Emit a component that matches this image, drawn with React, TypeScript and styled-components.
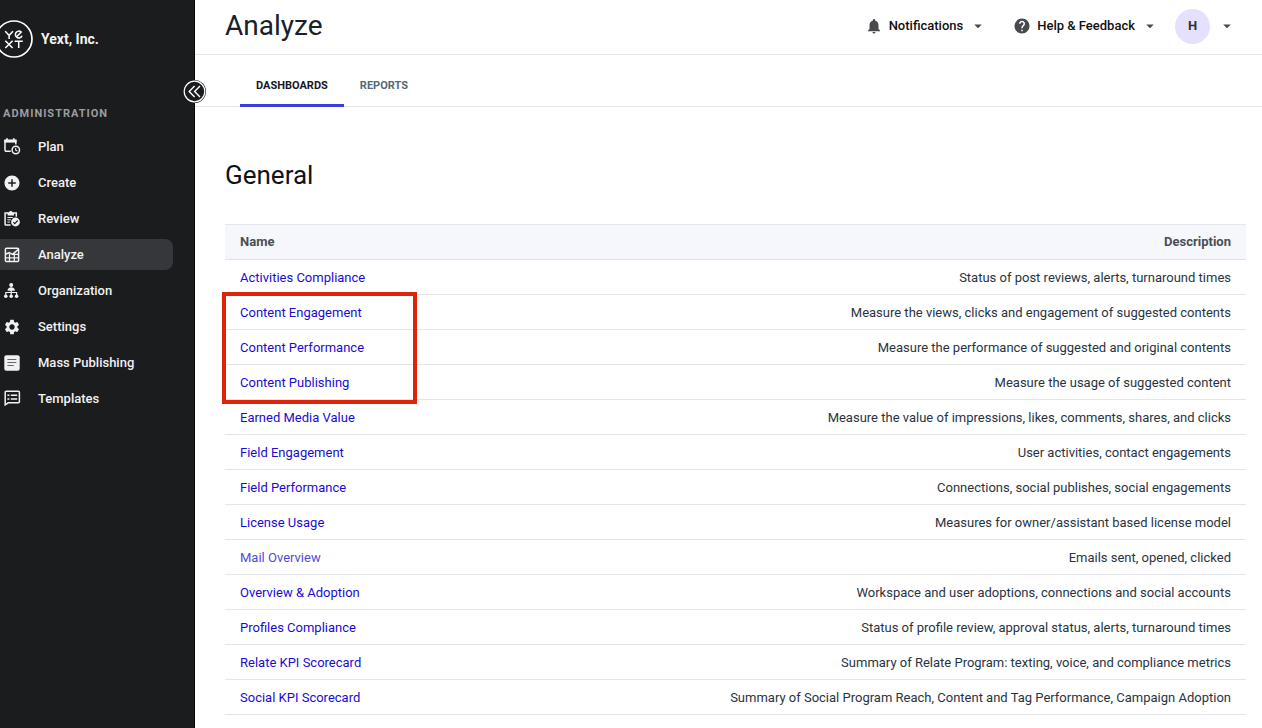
import React from 'react';
import styled, { createGlobalStyle } from 'styled-components';
import { MdAddCircle, MdArrowDropDown, MdHelp, MdNotifications, MdSettings } from 'react-icons/md';

const GlobalStyle = createGlobalStyle`
  * { box-sizing: border-box; }
  body {
    margin: 0;
    background: #fff;
    color: #29343f;
    font-family: Roboto, "Liberation Sans", sans-serif;
    font-size: 13px;
    line-height: 20px;
  }
  button { font: inherit; color: inherit; border: 0; background: none; padding: 0; cursor: pointer; }
  a { text-decoration: none; }
`;

const Shell = styled.div`
  display: flex;
  min-height: 100vh;
`;

const Sidebar = styled.aside`
  position: relative;
  flex: 0 0 195px;
  background: #1b1c1e;
  border-right: 1px solid #08080a;
  color: #f1f1f1;
`;

const Brand = styled.div`
  display: flex;
  align-items: center;
  gap: 8px;
  padding-top: 20px;
  margin-left: -5px;
  font-size: 14px;
  font-weight: 700;
`;

const Collapse = styled.button`
  position: absolute;
  top: 80px;
  right: -12px;
  width: 23px;
  height: 23px;
  svg { display: block; }
`;

const SectionLabel = styled.h2`
  margin: 46px 0 0;
  padding-left: 3px;
  font-size: 11px;
  line-height: 20px;
  font-weight: 700;
  letter-spacing: 1px;
  text-transform: uppercase;
  color: #9c9d9f;
`;

const Menu = styled.nav`
  display: flex;
  flex-direction: column;
  gap: 5px;
  padding: 7px 21px 0 0;
`;

const MenuItem = styled.a<{ $active?: boolean }>`
  display: flex;
  align-items: center;
  gap: 17px;
  height: 31px;
  padding-left: 3px;
  border-radius: 0 8px 8px 0;
  background: ${(p) => (p.$active ? '#36373a' : 'transparent')};
  color: #f1f1f1;
  font-weight: 500;
  svg { flex: none; }
`;

const Main = styled.main`
  flex: 1;
  min-width: 0;
`;

const TopBar = styled.header`
  display: flex;
  align-items: center;
  justify-content: space-between;
  height: 55px;
  padding: 0 26px 2px 30px;
  border-bottom: 1px solid #e4e4e6;
`;

const PageTitle = styled.h1`
  margin: 0;
  font-size: 28px;
  line-height: 36px;
  font-weight: 400;
  color: #17202b;
`;

const Actions = styled.div`
  display: flex;
  align-items: center;
  gap: 26px;
`;

const Action = styled.button`
  display: flex;
  align-items: center;
  gap: 6px;
  font-weight: 500;
  color: #101012;
  svg { color: #48494d; }
`;

const Account = styled(Action)`
  gap: 8px;
  margin-left: -10px;
`;

const Avatar = styled.span`
  display: grid;
  place-items: center;
  width: 35px;
  height: 35px;
  border-radius: 50%;
  background: #e5e1fd;
  color: #2f3036;
  font-weight: 700;
`;

const Tabs = styled.nav`
  display: flex;
  height: 52px;
  padding-left: 45px;
  border-bottom: 1px solid #e4e4e6;
`;

const Tab = styled.a<{ $active?: boolean }>`
  padding: 21px 16px 0;
  margin-bottom: -1px;
  border-bottom: 3px solid ${(p) => (p.$active ? '#3f3ce0' : 'transparent')};
  color: ${(p) => (p.$active ? '#17181c' : '#56687a')};
  font-size: 11px;
  font-weight: 700;
  text-transform: uppercase;
`;

const Content = styled.section`
  padding: 50px 16px 0 30px;
`;

const Heading = styled.h2`
  margin: 0 0 31px;
  font-size: 26px;
  line-height: 36px;
  font-weight: 400;
  color: #111216;
`;

const TableWrap = styled.div`
  position: relative;
`;

const Highlight = styled.div`
  position: absolute;
  top: 68px;
  left: -3px;
  width: 195px;
  height: 112px;
  border: 4px solid #de2308;
  pointer-events: none;
`;

const Table = styled.table`
  width: 100%;
  border-collapse: separate;
  border-spacing: 0;
`;

const HeadCell = styled.th<{ $end?: boolean }>`
  height: 36px;
  padding: 0 15px;
  border-top: 1px solid #e5e6ec;
  border-bottom: 1px solid #e1e3e9;
  background: #f6f7fd;
  color: #4c4e54;
  font-weight: 700;
  text-align: ${(p) => (p.$end ? 'right' : 'left')};
`;

const Cell = styled.td<{ $end?: boolean }>`
  height: 35px;
  padding: 1px 15px 0;
  border-bottom: 1px solid #e4e5e9;
  text-align: ${(p) => (p.$end ? 'right' : 'left')};
`;

const RowLink = styled.a<{ $soft?: boolean }>`
  color: ${(p) => (p.$soft ? '#514bdc' : '#1c0bd3')};
`;

const Logo = () => (
  <svg width="38" height="38" viewBox="0 0 38 38" fill="none" stroke="#fff" aria-label="Yext logo">
    <circle cx="19" cy="19" r="18" strokeWidth="1.7" />
    <g strokeWidth="1.5">
      <path d="M10.2 11.2l3.9 4.1 3.9-4.1M14.1 15.3v3.6" />
      <path d="M10.3 20.7l7.3 7.3M17.6 20.7l-7.3 7.3" />
      <path d="M19.6 21.2h8.2M23.7 21.2v6.8" />
      <path d="M21.2 17.2l5-5.1a3.4 3.4 0 1 0 .8 3.6" />
    </g>
  </svg>
);

const Icon = ({ children }: { children: React.ReactNode }) => (
  <svg width="18" height="18" viewBox="0 0 18 18" fill="none" stroke="currentColor" strokeWidth="1.5" aria-hidden="true">
    {children}
  </svg>
);

const PlanIcon = () => (
  <Icon>
    <path d="M7.8 13.2H3.2A1.2 1.2 0 0 1 2 12V2.4h10.8v4" />
    <path d="M1.3 1.6h12.2v3H1.3z" fill="currentColor" stroke="none" />
    <path d="M4 .2v2M10.8.2v2" strokeWidth="1.7" />
    <circle cx="12.8" cy="12" r="3.7" />
    <path d="M12.7 9.9v2.3l1.6.9" strokeWidth="1.1" />
  </Icon>
);

const ReviewIcon = () => (
  <Icon>
    <path d="M5 3H2.1v11.2a.9.9 0 0 0 .9.9h4.6M10.5 3h2.8v3.8" />
    <path d="M4.6 2.2h1.5a1.8 1.8 0 0 1 3.4 0H11v3.2H4.6z" fill="currentColor" stroke="none" />
    <path d="M4.4 7.5h5.4M4.4 9.8h3.5M4.4 12.1h2.4" strokeWidth="1" />
    <circle cx="12.5" cy="12" r="4.4" fill="currentColor" stroke="none" />
    <path d="M10.3 12.1l1.5 1.5 2.9-3.1" stroke="#1b1c1e" strokeWidth="1.1" />
  </Icon>
);

const AnalyzeIcon = () => (
  <Icon>
    <rect x="2.4" y="2.2" width="13.2" height="13.4" rx="1" />
    <path d="M2.4 8.3l3.8-1.6 3.2 1.6L15.4 3.4" />
    <path d="M6.5 8v7.4M11.3 7.2v8.2M2.5 11.8h13M9 8.4h6.5" strokeWidth="1.3" />
  </Icon>
);

const OrganizationIcon = () => (
  <Icon>
    <g fill="currentColor" stroke="none">
      <circle cx="8.2" cy="2.9" r="2" />
      <path d="M4.5 8.8c0-2.2 1.6-3.5 3.7-3.5s3.7 1.3 3.7 3.5z" />
      <circle cx="2.8" cy="14.3" r="1.8" />
      <circle cx="8.2" cy="14.3" r="1.8" />
      <circle cx="13.6" cy="14.3" r="1.8" />
    </g>
    <path d="M2.8 13v-2.5h10.8V13M8.2 8v5" strokeWidth="1.2" />
  </Icon>
);

const PublishingIcon = () => (
  <Icon>
    <rect x="1.3" y="1.2" width="15.4" height="15.6" rx="2" fill="currentColor" stroke="none" />
    <path d="M4.4 5.5h9M4.4 8.5h9M4.4 11.5h6.3" stroke="#66676a" strokeWidth="1" />
  </Icon>
);

const TemplatesIcon = () => (
  <Icon>
    <path d="M2.2 14.8V2.2a1 1 0 0 1 1-1h12.2a1 1 0 0 1 1 1v9.6a1 1 0 0 1-1 1H5.2z" />
    <path d="M4.4 5.3h2M7.8 5.3h6.4M4.4 8.9h2M7.8 8.9h6.4" strokeWidth="1.5" />
  </Icon>
);

const menu = [
  { label: 'Plan', icon: <PlanIcon /> },
  { label: 'Create', icon: <MdAddCircle size={18} /> },
  { label: 'Review', icon: <ReviewIcon /> },
  { label: 'Analyze', icon: <AnalyzeIcon />, active: true },
  { label: 'Organization', icon: <OrganizationIcon /> },
  { label: 'Settings', icon: <MdSettings size={18} /> },
  { label: 'Mass Publishing', icon: <PublishingIcon /> },
  { label: 'Templates', icon: <TemplatesIcon /> },
];

const dashboards = [
  ['Activities Compliance', 'Status of post reviews, alerts, turnaround times'],
  ['Content Engagement', 'Measure the views, clicks and engagement of suggested contents'],
  ['Content Performance', 'Measure the performance of suggested and original contents'],
  ['Content Publishing', 'Measure the usage of suggested content'],
  ['Earned Media Value', 'Measure the value of impressions, likes, comments, shares, and clicks'],
  ['Field Engagement', 'User activities, contact engagements'],
  ['Field Performance', 'Connections, social publishes, social engagements'],
  ['License Usage', 'Measures for owner/assistant based license model'],
  ['Mail Overview', 'Emails sent, opened, clicked'],
  ['Overview & Adoption', 'Workspace and user adoptions, connections and social accounts'],
  ['Profiles Compliance', 'Status of profile review, approval status, alerts, turnaround times'],
  ['Relate KPI Scorecard', 'Summary of Relate Program: texting, voice, and compliance metrics'],
  ['Social KPI Scorecard', 'Summary of Social Program Reach, Content and Tag Performance, Campaign Adoption'],
];

export default function App() {
  return (
    <Shell>
      <GlobalStyle />
      <Sidebar>
        <Brand>
          <Logo />
          <span>Yext, Inc.</span>
        </Brand>
        <SectionLabel>Administration</SectionLabel>
        <Menu>
          {menu.map((m) => (
            <MenuItem key={m.label} href="#" $active={m.active}>
              {m.icon}
              {m.label}
            </MenuItem>
          ))}
        </Menu>
        <Collapse aria-label="Collapse sidebar">
          <svg width="23" height="23" viewBox="0 0 23 23" fill="none" stroke="#fff">
            <circle cx="11.5" cy="11.5" r="11.5" fill="#1b1c1e" stroke="none" />
            <circle cx="11.5" cy="11.5" r="10.3" strokeWidth="1.2" />
            <path d="M11.6 6l-5.4 5.5 5.4 5.5M17 6l-5.4 5.5 5.4 5.5" strokeWidth="1.4" />
          </svg>
        </Collapse>
      </Sidebar>
      <Main>
        <TopBar>
          <PageTitle>Analyze</PageTitle>
          <Actions>
            <Action>
              <MdNotifications size={18} />
              Notifications
              <MdArrowDropDown size={18} />
            </Action>
            <Action>
              <MdHelp size={18} />
              Help &amp; Feedback
              <MdArrowDropDown size={18} />
            </Action>
            <Account aria-label="Account">
              <Avatar>H</Avatar>
              <MdArrowDropDown size={18} />
            </Account>
          </Actions>
        </TopBar>
        <Tabs>
          <Tab href="#" $active>Dashboards</Tab>
          <Tab href="#">Reports</Tab>
        </Tabs>
        <Content>
          <Heading>General</Heading>
          <TableWrap>
            <Table>
              <thead>
                <tr>
                  <HeadCell scope="col">Name</HeadCell>
                  <HeadCell scope="col" $end>Description</HeadCell>
                </tr>
              </thead>
              <tbody>
                {dashboards.map(([name, description]) => (
                  <tr key={name}>
                    <Cell>
                      <RowLink href="#" $soft={name === 'Mail Overview'}>{name}</RowLink>
                    </Cell>
                    <Cell $end>{description}</Cell>
                  </tr>
                ))}
              </tbody>
            </Table>
            <Highlight />
          </TableWrap>
        </Content>
      </Main>
    </Shell>
  );
}
